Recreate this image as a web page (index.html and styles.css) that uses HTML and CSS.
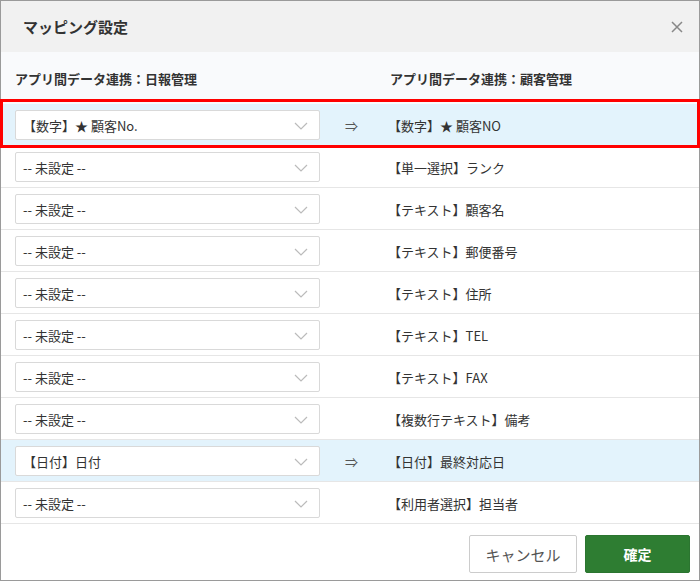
FILE: index.html
```html
<!DOCTYPE html>
<html lang="ja">
<head>
    <meta charset="UTF-8">
    <meta name="viewport" content="width=device-width, initial-scale=1.0">
    <title>マッピング設定</title>
    <link rel="stylesheet" href="styles.css">
</head>
<body>
    <div class="dialog">
        <div class="dialog-header">
            <h2>マッピング設定</h2>
            <button class="close" aria-label="閉じる">
                <svg width="12" height="12" viewBox="0 0 12 12"><path d="M1 1L11 11M11 1L1 11" stroke="#888" stroke-width="1.5" fill="none"/></svg>
            </button>
        </div>

        <div class="mapping">
            <div class="mapping-head">
                <div>アプリ間データ連携：日報管理</div>
                <div></div>
                <div class="dest">アプリ間データ連携：顧客管理</div>
            </div>

            <div class="mapping-row mapped marked">
                <div class="select"><span>【数字】★ 顧客No.</span><svg class="chevron" width="14" height="8" viewBox="0 0 14 8"><path d="M1 1L7 7L13 1" stroke="#bbb" stroke-width="1.2" fill="none"/></svg></div>
                <div class="arrow">⇒</div>
                <div class="dest">【数字】★ 顧客NO</div>
            </div>
            <div class="mapping-row">
                <div class="select"><span>-- 未設定 --</span><svg class="chevron" width="14" height="8" viewBox="0 0 14 8"><path d="M1 1L7 7L13 1" stroke="#bbb" stroke-width="1.2" fill="none"/></svg></div>
                <div class="arrow"></div>
                <div class="dest">【単一選択】ランク</div>
            </div>
            <div class="mapping-row">
                <div class="select"><span>-- 未設定 --</span><svg class="chevron" width="14" height="8" viewBox="0 0 14 8"><path d="M1 1L7 7L13 1" stroke="#bbb" stroke-width="1.2" fill="none"/></svg></div>
                <div class="arrow"></div>
                <div class="dest">【テキスト】顧客名</div>
            </div>
            <div class="mapping-row">
                <div class="select"><span>-- 未設定 --</span><svg class="chevron" width="14" height="8" viewBox="0 0 14 8"><path d="M1 1L7 7L13 1" stroke="#bbb" stroke-width="1.2" fill="none"/></svg></div>
                <div class="arrow"></div>
                <div class="dest">【テキスト】郵便番号</div>
            </div>
            <div class="mapping-row">
                <div class="select"><span>-- 未設定 --</span><svg class="chevron" width="14" height="8" viewBox="0 0 14 8"><path d="M1 1L7 7L13 1" stroke="#bbb" stroke-width="1.2" fill="none"/></svg></div>
                <div class="arrow"></div>
                <div class="dest">【テキスト】住所</div>
            </div>
            <div class="mapping-row">
                <div class="select"><span>-- 未設定 --</span><svg class="chevron" width="14" height="8" viewBox="0 0 14 8"><path d="M1 1L7 7L13 1" stroke="#bbb" stroke-width="1.2" fill="none"/></svg></div>
                <div class="arrow"></div>
                <div class="dest">【テキスト】TEL</div>
            </div>
            <div class="mapping-row">
                <div class="select"><span>-- 未設定 --</span><svg class="chevron" width="14" height="8" viewBox="0 0 14 8"><path d="M1 1L7 7L13 1" stroke="#bbb" stroke-width="1.2" fill="none"/></svg></div>
                <div class="arrow"></div>
                <div class="dest">【テキスト】FAX</div>
            </div>
            <div class="mapping-row">
                <div class="select"><span>-- 未設定 --</span><svg class="chevron" width="14" height="8" viewBox="0 0 14 8"><path d="M1 1L7 7L13 1" stroke="#bbb" stroke-width="1.2" fill="none"/></svg></div>
                <div class="arrow"></div>
                <div class="dest">【複数行テキスト】備考</div>
            </div>
            <div class="mapping-row mapped">
                <div class="select"><span>【日付】日付</span><svg class="chevron" width="14" height="8" viewBox="0 0 14 8"><path d="M1 1L7 7L13 1" stroke="#bbb" stroke-width="1.2" fill="none"/></svg></div>
                <div class="arrow">⇒</div>
                <div class="dest">【日付】最終対応日</div>
            </div>
            <div class="mapping-row">
                <div class="select"><span>-- 未設定 --</span><svg class="chevron" width="14" height="8" viewBox="0 0 14 8"><path d="M1 1L7 7L13 1" stroke="#bbb" stroke-width="1.2" fill="none"/></svg></div>
                <div class="arrow"></div>
                <div class="dest">【利用者選択】担当者</div>
            </div>
        </div>

        <div class="dialog-footer">
            <button class="btn btn-cancel">キャンセル</button>
            <button class="btn btn-ok">確定</button>
        </div>
    </div>
</body>
</html>
```

FILE: styles.css
```css
body {
    margin: 0;
    font-family: 'Noto Sans CJK JP', 'Noto Sans', sans-serif;
    color: #333;
    background-color: #fff;
}

.dialog {
    width: 700px;
    height: 581px;
    box-sizing: border-box;
    border: 1px solid #9a9a9a;
    display: flex;
    flex-direction: column;
    background-color: #fff;
}

.dialog-header {
    height: 51px;
    background-color: #f1f1f1;
    display: flex;
    align-items: center;
    justify-content: space-between;
    padding: 0 15px 0 22px;
}

.dialog-header h2 {
    margin: 0;
    font-size: 15px;
    font-weight: bold;
    color: #333;
}

.close {
    background: none;
    border: none;
    padding: 0;
    width: 14px;
    height: 14px;
    display: flex;
    align-items: center;
    justify-content: center;
    cursor: pointer;
}

.mapping-head,
.mapping-row {
    display: grid;
    grid-template-columns: 305px 68px 1fr;
    align-items: center;
    padding: 0 14px;
    font-size: 13px;
}

.mapping-head {
    height: 52px;
    background-color: #f9fafc;
    font-weight: bold;
    color: #333;
}

.mapping-head .dest {
    padding-left: 2px;
}

.mapping-row {
    height: 42px;
    box-sizing: border-box;
    padding-top: 1px;
    border-bottom: 1px solid #e6e6e6;
    position: relative;
}

.mapping-row.mapped {
    background-color: #e3f3fc;
}

.mapping-row.marked::after {
    content: "";
    position: absolute;
    top: -5px;
    bottom: -3px;
    left: -1px;
    right: -1px;
    border: 3px solid #f00;
    pointer-events: none;
}

.select {
    height: 30px;
    box-sizing: border-box;
    border: 1px solid #d9d9d9;
    border-radius: 2px;
    background-color: #fff;
    display: flex;
    align-items: center;
    justify-content: space-between;
    padding: 0 11px 0 7px;
    color: #333;
}

.chevron {
    margin-top: 2px;
}

.arrow {
    padding-left: 25px;
    color: #555;
}

.dest {
    color: #333;
}

.dialog-footer {
    flex: 1;
    display: flex;
    justify-content: flex-end;
    align-items: flex-start;
    gap: 8px;
    padding: 11px 9px 0 0;
}

.btn {
    height: 38px;
    font-family: 'Noto Sans CJK JP', 'Noto Sans', sans-serif;
    font-size: 14px;
    border-radius: 2px;
    cursor: pointer;
}

.btn-cancel {
    width: 108px;
    background-color: #fff;
    border: 1px solid #ccc;
    color: #555;
    font-size: 15px;
}

.btn-ok {
    width: 105px;
    background-color: #2e7d32;
    border: 1px solid #2b7530;
    color: #fff;
    font-weight: bold;
}
```
